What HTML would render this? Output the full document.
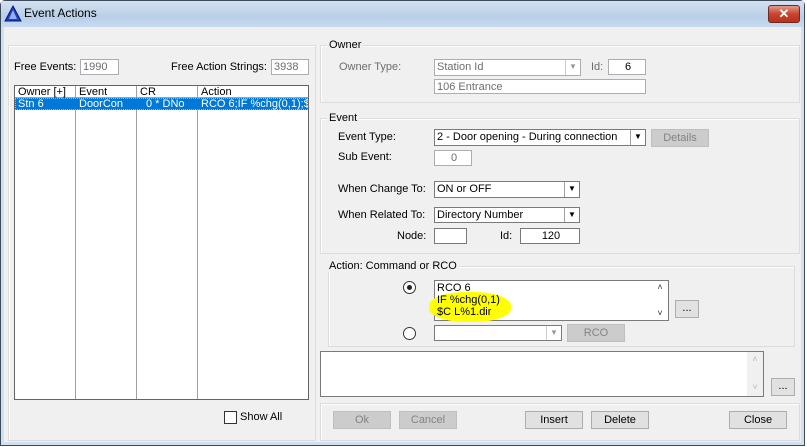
<!DOCTYPE html>
<html><head><style>
*{box-sizing:border-box;margin:0;padding:0}
body{width:807px;height:447px;overflow:hidden;background:#fff;font:11px "Liberation Sans",sans-serif;color:#000;position:relative}
.a{position:absolute}
.win{left:0;top:0;width:805px;height:446px;background:#cfe0f2;border:1px solid #3c4a5a;border-radius:5px 5px 0 0}
.title{left:1px;top:1px;width:803px;height:26px;background:linear-gradient(#d3e1f1,#b9cfe7 60%,#c6daf0)}
.client{left:4px;top:27px;width:797px;height:415px;background:#f0f0f0}
.grp{border:1px solid #dcdcdc;box-shadow:inset 1px 1px 0 #fff}
.gl{background:#f0f0f0;padding:0 2px;line-height:12px}
.box{background:#fff;border:1px solid #7a7a7a;line-height:14px;padding-left:2px;white-space:nowrap;overflow:hidden}
.dis{color:#6d6d6d;border-color:#abadb3}
.btn{background:#e1e1e1;border:1px solid #adadad;text-align:center;line-height:16px}
.bd{color:#838383;background:#cccccc;border-color:#bfbfbf}
.dd{position:absolute;right:0;top:0;width:15px;height:100%;border-left:1px solid #a0a0a0;background:#fff;font-size:8px;text-align:center;line-height:14px}
.gray{color:#6d6d6d}
</style></head><body>
<div class="a win"></div>
<div class="a title"></div>
<svg class="a" style="left:4px;top:5px" width="18" height="17"><polygon points="9,1 17,16 1,16" fill="#2040c0" stroke="#0a1a70"/><polygon points="9,5 13,14 5,14" fill="#8fb0ff"/></svg>
<div class="a" style="left:24px;top:6px;font-size:12px">Event Actions</div>
<div class="a" style="left:768px;top:5px;width:32px;height:18px;border:1px solid #6e2a22;border-radius:3px;background:linear-gradient(#e29b8c,#c8442e 50%,#b8321e);color:#fff;font-weight:bold;text-align:center;line-height:16px;font-size:13px">✕</div>
<div class="a client"></div>

<div class="a grp" style="left:8px;top:45px;width:308px;height:396px"></div>
<div class="a" style="left:14px;top:61px">Free Events:</div>
<div class="a box dis" style="left:80px;top:59px;width:39px;height:16px">1990</div>
<div class="a" style="left:171px;top:61px">Free Action Strings:</div>
<div class="a box dis" style="left:271px;top:59px;width:38px;height:16px">3938</div>
<div class="a" style="left:14px;top:85px;width:295px;height:315px;background:#fff;border:1px solid #646464"></div>
<div class="a" style="left:75px;top:86px;width:1px;height:313px;background:#a0a0a0"></div>
<div class="a" style="left:136px;top:86px;width:1px;height:313px;background:#a0a0a0"></div>
<div class="a" style="left:197px;top:86px;width:1px;height:313px;background:#a0a0a0"></div>
<div class="a" style="left:15px;top:97px;width:293px;height:1px;background:#a0a0a0"></div>
<div class="a" style="left:18px;top:86px">Owner [+]</div>
<div class="a" style="left:79px;top:86px">Event</div>
<div class="a" style="left:140px;top:86px">CR</div>
<div class="a" style="left:201px;top:86px">Action</div>
<div class="a" style="left:15px;top:98px;width:293px;height:12px;background:#0078d7;outline:1px dotted #f0a060;outline-offset:-1px"></div>
<div class="a" style="left:18px;top:98px;color:#fff">Stn 6</div>
<div class="a" style="left:79px;top:98px;color:#fff">DoorCon</div>
<div class="a" style="left:146px;top:98px;color:#fff">0 * DNo</div>
<div class="a" style="left:201px;top:98px;color:#fff;width:107px;overflow:hidden;white-space:nowrap">RCO 6;IF %chg(0,1);$</div>
<div class="a" style="left:224px;top:411px;width:13px;height:13px;border:1px solid #333;background:#fff"></div>
<div class="a" style="left:240px;top:411px">Show All</div>

<div class="a grp" style="left:320px;top:45px;width:480px;height:58px"></div>
<div class="a gl" style="left:327px;top:39px">Owner</div>
<div class="a gray" style="left:339px;top:61px">Owner Type:</div>
<div class="a box dis" style="left:434px;top:59px;width:147px;height:17px">Station Id<div class="dd" style="color:#999;border-color:#ccc">▼</div></div>
<div class="a gray" style="left:591px;top:61px">Id:</div>
<div class="a box dis" style="left:608px;top:59px;width:38px;height:16px;text-align:center;color:#000">6</div>
<div class="a box dis" style="left:434px;top:79px;width:212px;height:15px">106 Entrance</div>

<div class="a grp" style="left:320px;top:118px;width:480px;height:136px"></div>
<div class="a gl" style="left:327px;top:112px">Event</div>
<div class="a" style="left:338px;top:131px">Event Type:</div>
<div class="a box" style="left:434px;top:129px;width:212px;height:17px">2 - Door opening - During connection<div class="dd">▼</div></div>
<div class="a btn bd" style="left:651px;top:129px;width:58px;height:18px">Details</div>
<div class="a" style="left:338px;top:151px">Sub Event:</div>
<div class="a box dis" style="left:434px;top:150px;width:38px;height:16px;text-align:center">0</div>
<div class="a" style="left:338px;top:183px">When Change To:</div>
<div class="a box" style="left:434px;top:181px;width:146px;height:17px">ON or OFF<div class="dd">▼</div></div>
<div class="a" style="left:338px;top:209px">When Related To:</div>
<div class="a box" style="left:434px;top:207px;width:146px;height:16px">Directory Number<div class="dd">▼</div></div>
<div class="a" style="left:397px;top:230px">Node:</div>
<div class="a box" style="left:434px;top:228px;width:33px;height:16px"></div>
<div class="a" style="left:500px;top:230px">Id:</div>
<div class="a box" style="left:520px;top:228px;width:60px;height:16px;text-align:center">120</div>

<div class="a grp" style="left:328px;top:266px;width:467px;height:81px"></div>
<div class="a gl" style="left:327px;top:260px">Action: Command or RCO</div>
<div class="a" style="left:403px;top:281px;width:13px;height:13px;border:1px solid #333;border-radius:50%;background:#fff"></div>
<div class="a" style="left:407px;top:285px;width:5px;height:5px;border-radius:50%;background:#222"></div>
<div class="a" style="left:403px;top:327px;width:13px;height:13px;border:1px solid #333;border-radius:50%;background:#fff"></div>
<div class="a box" style="left:434px;top:280px;width:235px;height:41px"></div>
<div class="a" style="left:429px;top:292px;width:82px;height:30px;background:#ffff00;border-radius:45%"></div>
<div class="a" style="left:437px;top:282px;line-height:12px">RCO 6<br>IF %chg(0,1)<br>$C L%1.dir</div>
<div class="a" style="left:652px;top:281px;width:16px;height:39px;background:#fff;font-size:9px;text-align:center;line-height:13px;color:#333">˄<br><br>˅</div>
<div class="a btn" style="left:675px;top:300px;width:24px;height:18px;line-height:14px">...</div>
<div class="a box" style="left:434px;top:325px;width:128px;height:16px"><div class="dd" style="color:#999;border-color:#ccc">▼</div></div>
<div class="a btn bd" style="left:567px;top:324px;width:58px;height:18px">RCO</div>

<div class="a box" style="left:320px;top:351px;width:444px;height:46px"><div class="a" style="right:0;top:0;width:16px;height:44px;background:#f0f0f0;color:#bbb;font-size:9px;text-align:center;line-height:14px">˄<br><br>˅</div></div>
<div class="a btn" style="left:771px;top:378px;width:24px;height:18px;line-height:14px">...</div>

<div class="a grp" style="left:320px;top:403px;width:480px;height:38px"></div>
<div class="a btn bd" style="left:333px;top:411px;width:58px;height:18px">Ok</div>
<div class="a btn bd" style="left:399px;top:411px;width:58px;height:18px">Cancel</div>
<div class="a btn" style="left:525px;top:411px;width:58px;height:18px">Insert</div>
<div class="a btn" style="left:591px;top:411px;width:58px;height:18px">Delete</div>
<div class="a btn" style="left:729px;top:411px;width:58px;height:18px">Close</div>
</body></html>
